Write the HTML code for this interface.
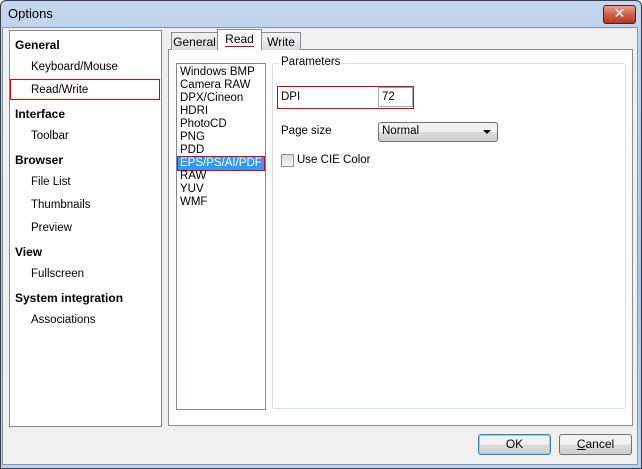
<!DOCTYPE html>
<html><head><style>
*{margin:0;padding:0;box-sizing:border-box}
body{width:642px;height:469px;background:#fff;font-family:Tahoma,"DejaVu Sans","Liberation Sans",sans-serif;font-size:11px;color:#000;position:relative;overflow:hidden}
.a{position:absolute}
#win{left:0;top:0;width:642px;height:469px;background:linear-gradient(#c3d6ec,#a9c4e2 60%,#b9d1ea);border:1px solid #3a3f4a;border-radius:6px 6px 0 0}
#client{left:2px;top:27px;width:636px;height:438px;background:#f0f0f0;border:1px solid #7a98b8}
.t{font-family:"Liberation Sans",sans-serif;font-size:12px;white-space:nowrap}
.box{background:#fff;border:1px solid #828790}
.li{position:absolute;left:31px;font-size:11.5px;font-family:"Liberation Sans",sans-serif}
.hd{position:absolute;left:15px;font-weight:bold;font-size:12px;font-family:"Liberation Sans",sans-serif}
.it{position:absolute;left:3px;font-size:11.5px;font-family:"Liberation Sans",sans-serif;line-height:13px}
.btn{border:1px solid #707070;border-radius:3px;background:linear-gradient(#f2f2f2 50%,#dcdcdc 50%,#cfcfcf);text-align:center;font-family:"Liberation Sans",sans-serif;font-size:12px;line-height:19px}
</style></head><body>
<div id="win" class="a"></div>
<div class="a t" style="left:8px;top:6px;font-size:13px;color:#000">Options</div>
<div class="a" style="left:603px;top:5px;width:33px;height:19px;border:1px solid #4a2020;border-radius:3px;background:linear-gradient(#e8a090,#d06048 50%,#b83820);color:#fff;text-align:center;font-weight:bold;font-size:14px;line-height:17px;font-family:'DejaVu Sans',sans-serif">✕</div>
<div id="client" class="a"></div>

<div class="a box" style="left:9px;top:30px;width:153px;height:397px"></div>
<div class="hd" style="top:38px">General</div>
<div class="li" style="top:61px">Keyboard/Mouse</div>
<div class="a" style="left:10px;top:79px;width:150px;height:21px;border:1px solid #e00000"></div>
<div class="li" style="top:84px">Read/Write</div>
<div class="hd" style="top:107px">Interface</div>
<div class="li" style="top:130px">Toolbar</div>
<div class="hd" style="top:153px">Browser</div>
<div class="li" style="top:176px">File List</div>
<div class="li" style="top:199px">Thumbnails</div>
<div class="li" style="top:222px">Preview</div>
<div class="hd" style="top:245px">View</div>
<div class="li" style="top:268px">Fullscreen</div>
<div class="hd" style="top:291px">System integration</div>
<div class="li" style="top:314px">Associations</div>

<!-- tabs -->
<div class="a" style="left:168px;top:49px;width:465px;height:377px;background:#fff;border:1px solid #898c95"></div>
<div class="a" style="left:171px;top:32px;width:47px;height:18px;border:1px solid #898c95;border-bottom:none;background:linear-gradient(#f2f2f2,#dcdcdc);text-align:center;line-height:19px" ><span class="t">General</span></div>
<div class="a" style="left:217px;top:29px;width:45px;height:21px;border:1px solid #898c95;border-bottom:none;background:#fff;text-align:center;line-height:20px"><span class="t" style="border-bottom:1px solid #e00000;line-height:13px;display:inline-block">Read</span></div>
<div class="a" style="left:261px;top:32px;width:40px;height:18px;border:1px solid #898c95;border-bottom:none;background:linear-gradient(#f2f2f2,#dcdcdc);text-align:center;line-height:19px"><span class="t">Write</span></div>

<div class="a box" style="left:176px;top:63px;width:90px;height:347px">
<div class="it" style="top:2px">Windows BMP</div>
<div class="it" style="top:15px">Camera RAW</div>
<div class="it" style="top:28px">DPX/Cineon</div>
<div class="it" style="top:41px">HDRI</div>
<div class="it" style="top:54px">PhotoCD</div>
<div class="it" style="top:67px">PNG</div>
<div class="it" style="top:80px">PDD</div>
<div class="a" style="left:0;top:92px;width:88px;height:15px;background:#3399ff;border:1px solid #e00000"></div>
<div class="it" style="top:93px;color:#fff">EPS/PS/AI/PDF</div>
<div class="it" style="top:106px">RAW</div>
<div class="it" style="top:119px">YUV</div>
<div class="it" style="top:132px">WMF</div>
</div>

<div class="a" style="left:272px;top:63px;width:354px;height:346px;border:1px solid #d5dfe5;border-radius:3px"></div>
<div class="a t" style="left:279px;top:56px;background:#fff;padding:0 2px;font-size:11.5px">Parameters</div>
<div class="a" style="left:277px;top:86px;width:137px;height:23px;border:1px solid #e00000"></div>
<div class="a t" style="left:281px;top:91px;font-size:11.5px">DPI</div>
<div class="a" style="left:378px;top:87px;width:35px;height:20px;border:1px solid #abadb3;border-top-color:#7fa6c9;background:#fff"></div>
<div class="a t" style="left:382px;top:91px;font-size:11.5px">72</div>
<div class="a t" style="left:281px;top:125px;font-size:11.5px">Page size</div>
<div class="a" style="left:378px;top:122px;width:120px;height:20px;border:1px solid #707070;border-radius:3px;background:linear-gradient(#f2f2f2 50%,#dcdcdc 50%,#cfcfcf)"></div>
<div class="a t" style="left:382px;top:125px;font-size:11.5px">Normal</div>
<div class="a" style="left:483px;top:130px;width:0;height:0;border-left:4px solid transparent;border-right:4px solid transparent;border-top:4px solid #000"></div>
<div class="a" style="left:281px;top:154px;width:13px;height:13px;border:1px solid #8f8f8f;background:linear-gradient(#dcdcdc,#f6f6f6)"></div>
<div class="a t" style="left:297px;top:154px;font-size:11.5px">Use CIE Color</div>

<div class="a btn" style="left:478px;top:434px;width:73px;height:21px;border-color:#3c7fb1;box-shadow:inset 0 0 0 1px #8ed0f5">O<span>K</span></div>
<div class="a btn" style="left:559px;top:434px;width:73px;height:21px"><u>C</u>ancel</div>
</body></html>
